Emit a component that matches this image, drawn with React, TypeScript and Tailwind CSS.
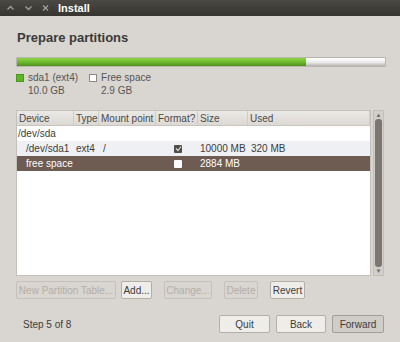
import React from 'react';

/* ++++++++++ TYPES ++++++++++ */
interface Row {
  device: string;
  type: string;
  mount: string;
  format: 'none' | 'on' | 'off';
  size: string;
  used: string;
  indent?: boolean;
  tone: 'plain' | 'alt' | 'selected';
}

const rows: Row[] = [
  { device: '/dev/sda', type: '', mount: '', format: 'none', size: '', used: '', tone: 'plain' },
  { device: '/dev/sda1', type: 'ext4', mount: '/', format: 'on', size: '10000 MB', used: '320 MB', indent: true, tone: 'alt' },
  { device: 'free space', type: '', mount: '', format: 'off', size: '2884 MB', used: '', indent: true, tone: 'selected' },
];

const cols = ['w-[57px]', 'w-[25px]', 'w-[57px]', 'w-[42px]', 'w-[50px]', 'flex-1'];

const Btn: React.FC<{ label: string; disabled?: boolean; main?: boolean; w: string }> = ({ label, disabled, main, w }) => (
  <div
    className={`${w} h-[18px] flex items-center justify-center rounded-[2px] border text-[10px] whitespace-nowrap ${
      disabled
        ? 'border-[#c4c0ba] bg-[#d9d5d0] text-[#b3afa9]'
        : main
        ? 'border-[#a19d97] bg-[#d0ccc6] text-[#3c3c3c]'
        : 'border-[#b3afa9] bg-[#efedea] text-[#3c3c3c]'
    }`}
  >
    {label}
  </div>
);

// window controls: up, down, close
const Ctl: React.FC<{ d: string }> = ({ d }) => (
  <svg width="7" height="6" viewBox="0 0 7 6" className="shrink-0">
    <path d={d} stroke="#a19f99" strokeWidth="1.3" fill="none" />
  </svg>
);

const App: React.FC = () => {
  return (
    <div
      className="w-[400px] h-[342px] bg-[#d9d5d0] flex flex-col overflow-hidden text-[#3c3c3c]"
      style={{ fontFamily: '"Liberation Sans", Arial, sans-serif' }}
    >
      {/* title bar */}
      <div className="h-[16px] bg-gradient-to-b from-[#4a4944] to-[#36352f] flex items-center pl-[7px]">
        <Ctl d="M0.5 4.5 L3.5 1.5 L6.5 4.5" />
        <div className="w-[11px]" />
        <Ctl d="M0.5 1.5 L3.5 4.5 L6.5 1.5" />
        <div className="w-[10px]" />
        <Ctl d="M1 0.5 L6 5.5 M6 0.5 L1 5.5" />
        <span className="ml-[9px] text-[11px] font-bold text-white">Install</span>
      </div>

      <div className="flex flex-col px-[16px]">
        <div className="mt-[14px] text-[13px] leading-[16px] font-bold text-[#3a3a3a] pl-[1px]">Prepare partitions</div>

        {/* usage bar */}
        <div className="mt-[11px] h-[10px] w-[370px] flex rounded-[1px] overflow-hidden border border-[#b8b4ae]">
          <div className="w-[289px] bg-gradient-to-b from-[#8fd44a] via-[#6cbb2c] to-[#4f8f1f]" />
          <div className="flex-1 bg-gradient-to-b from-[#ffffff] via-[#eeeeee] to-[#b9b6b1]" />
        </div>

        {/* legend */}
        <div className="mt-[5px] flex text-[10px] leading-[12px] text-[#555]">
          <div className="flex">
            <div className="w-[8px] h-[8px] mt-[2px] bg-[#5fb526] border border-[#4a9a1a]" />
            <div className="ml-[4px] flex flex-col gap-[1px]">
              <div>sda1 (ext4)</div>
              <div>10.0 GB</div>
            </div>
          </div>
          <div className="flex ml-[11px]">
            <div className="w-[8px] h-[8px] mt-[2px] bg-white border border-[#8c8984]" />
            <div className="ml-[4px] flex flex-col gap-[1px]">
              <div>Free space</div>
              <div>2.9 GB</div>
            </div>
          </div>
        </div>

        {/* table + scrollbar */}
        <div className="mt-[13px] flex h-[166px]">
          <div className="w-[358px] flex flex-col bg-white border border-[#c4c0ba] text-[10px]">
            <div className="h-[15px] flex bg-gradient-to-b from-[#ebe9e6] to-[#dcd9d4] border-b border-[#c8c4be] text-[#4a4a4a]">
              {['Device', 'Type', 'Mount point', 'Format?', 'Size', 'Used'].map((h, i) => (
                <div key={h} className={`${cols[i]} px-[2px] flex items-center border-r border-[#cfcbc5] whitespace-nowrap`}>
                  {h}
                </div>
              ))}
            </div>
            {rows.map((r) => (
              <div
                key={r.device}
                className={`h-[15px] flex items-center ${
                  r.tone === 'selected' ? 'bg-[#6e5b52] text-white' : r.tone === 'alt' ? 'bg-[#eef0f4]' : 'bg-white'
                }`}
              >
                <div className={`${cols[0]} ${r.indent ? 'pl-[9px]' : 'pl-[1px]'} whitespace-nowrap`}>{r.device}</div>
                <div className={`${cols[1]} pl-[2px]`}>{r.type}</div>
                <div className={`${cols[2]} pl-[4px]`}>{r.mount}</div>
                <div className={`${cols[3]} flex justify-center pl-[2px]`}>
                  {r.format === 'on' && (
                    <div className="w-[8px] h-[8px] bg-[#4f4d49] rounded-[1px] flex items-center justify-center">
                      <svg width="7" height="7" viewBox="0 0 7 7">
                        <path d="M1 3.5 L3 5.5 L6 1.5" stroke="#d8d8d8" strokeWidth="1.2" fill="none" />
                      </svg>
                    </div>
                  )}
                  {r.format === 'off' && <div className="w-[8px] h-[8px] bg-white rounded-[1px]" />}
                </div>
                <div className={`${cols[4]} pl-[2px] whitespace-nowrap`}>{r.size}</div>
                <div className={`${cols[5]} pl-[3px]`}>{r.used}</div>
              </div>
            ))}
          </div>
          <div className="ml-[2px] w-[11px] flex flex-col items-center bg-[#d2cec9] border border-[#c2beb8]">
            <div className="h-[8px] text-[6px] leading-[8px] text-[#6f6c67]">&#9650;</div>
            <div className="flex-1 w-[7px] rounded-[3px] bg-[#7b766f]" />
            <div className="h-[8px] text-[6px] leading-[8px] text-[#6f6c67]">&#9660;</div>
          </div>
        </div>

        {/* partition buttons */}
        <div className="mt-[5px] flex gap-[5px]">
          <Btn label="New Partition Table..." disabled w="w-[100px]" />
          <Btn label="Add..." w="w-[31px]" />
          <div className="w-[2px]" />
          <Btn label="Change..." disabled w="w-[48px]" />
          <div className="w-[2px]" />
          <Btn label="Delete" disabled w="w-[34px]" />
          <div className="w-[2px]" />
          <Btn label="Revert" w="w-[35px]" />
        </div>

        {/* footer */}
        <div className="mt-[16px] flex items-center">
          <div className="ml-[7px] text-[10px] text-[#3c3c3c]">Step 5 of 8</div>
          <div className="ml-auto flex gap-[6px]">
            <Btn label="Quit" w="w-[51px]" />
            <Btn label="Back" w="w-[50px]" />
            <Btn label="Forward" main w="w-[52px]" />
          </div>
        </div>
      </div>
    </div>
  );
};

export default App;
